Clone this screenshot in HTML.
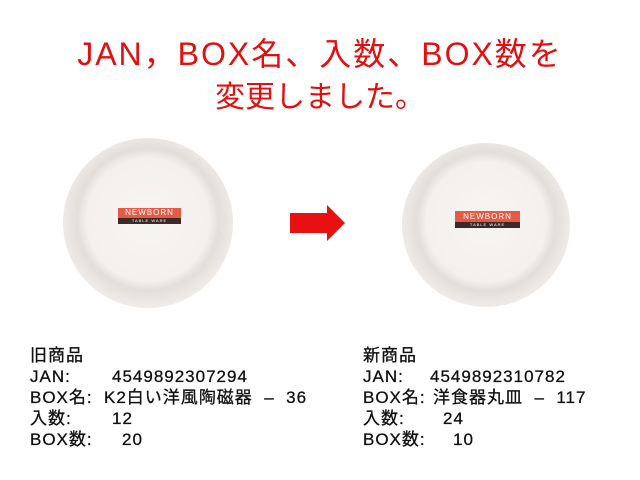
<!DOCTYPE html>
<html><head><meta charset="utf-8"><style>
body{margin:0;width:640px;height:480px;background:#fff;position:relative;overflow:hidden;font-family:"Liberation Sans","Noto Sans CJK JP",sans-serif}
.t{position:absolute;left:0;width:640px;text-align:center;color:#e01010;font-size:30px;line-height:34px;white-space:nowrap}
.bowl{position:absolute;border-radius:50%;background:radial-gradient(circle at 50% 48%,#f7f5f2 0,#f3f0ed 50%,#e2dfdb 58%,#efece9 72%,#dad7d3 94%,#c4c1bd 100%)}
.lab{position:absolute;background:#e55a45;color:#fff;font-size:8px;text-align:center;letter-spacing:1px}
.lab div{background:#3a2a2a;font-size:4px;height:6px;line-height:6px}
.r{position:absolute;font-size:17px;line-height:21px;color:#111;white-space:pre;letter-spacing:1px;-webkit-text-stroke:0.3px #111}
</style></head><body>
<div class="t" style="top:37px;font-size:32px;letter-spacing:2px">JAN，BOX名、入数、BOX数を</div>
<div class="t" style="top:81px">変更しました。</div>
<div class="bowl" style="left:63px;top:138px;width:170px;height:170px"></div>
<div class="lab" style="left:118px;top:208px;width:63px;height:16px;line-height:10px">NEWBORN<div>TABLE WARE</div></div>
<div class="bowl" style="left:402px;top:143px;width:168px;height:164px"></div>
<div class="lab" style="left:455px;top:211px;width:65px;height:17px;line-height:11px">NEWBORN<div>TABLE WARE</div></div>
<svg style="position:absolute;left:289px;top:204px" width="58" height="38"><polygon points="1,9 38,9 38,1 56,19 38,37 38,29 1,29" fill="#e81010"/></svg>

<div class="r" style="left:30px;top:345px">旧商品</div>
<div class="r" style="left:30px;top:366px">JAN:</div><div class="r" style="left:112px;top:366px">4549892307294</div>
<div class="r" style="left:30px;top:387px">BOX名:</div><div class="r" style="left:104px;top:387px">K2白い洋風陶磁器  –  36</div>
<div class="r" style="left:30px;top:408px">入数:</div><div class="r" style="left:112px;top:408px">12</div>
<div class="r" style="left:30px;top:429px">BOX数:</div><div class="r" style="left:122px;top:429px">20</div>

<div class="r" style="left:363px;top:345px">新商品</div>
<div class="r" style="left:363px;top:366px">JAN:</div><div class="r" style="left:430px;top:366px">4549892310782</div>
<div class="r" style="left:363px;top:387px">BOX名:</div><div class="r" style="left:433px;top:387px">洋食器丸皿  –  117</div>
<div class="r" style="left:363px;top:408px">入数:</div><div class="r" style="left:443px;top:408px">24</div>
<div class="r" style="left:363px;top:429px">BOX数:</div><div class="r" style="left:453px;top:429px">10</div>
</body></html>
